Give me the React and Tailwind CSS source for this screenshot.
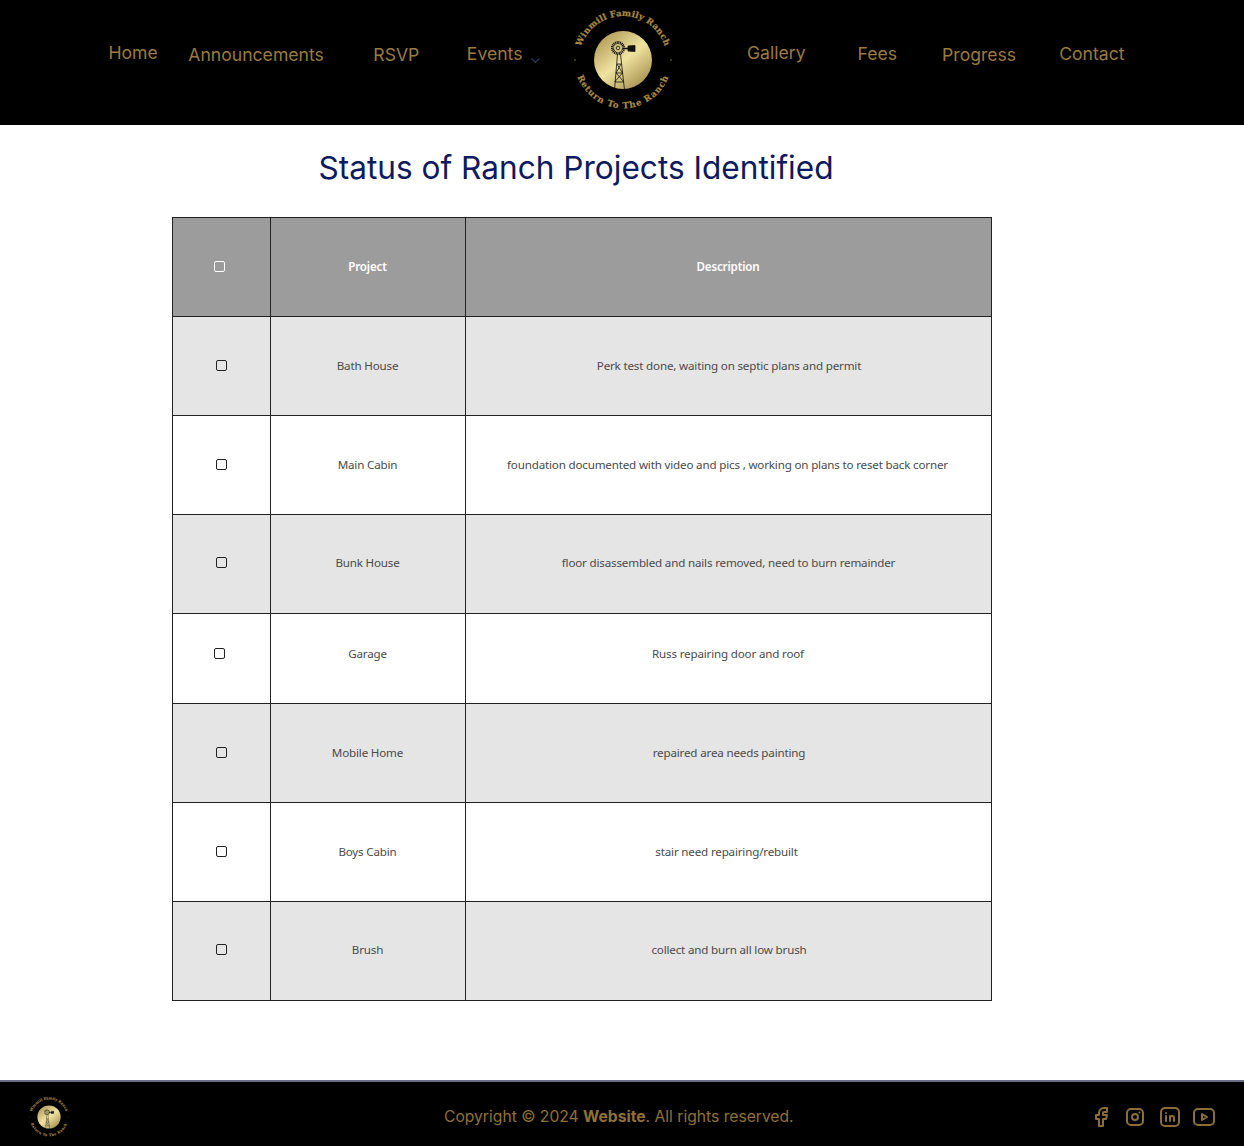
import React from 'react';
import { TbBrandFacebook, TbBrandInstagram, TbBrandLinkedin, TbBrandYoutube, TbChevronDown } from 'react-icons/tb';

const rows = [
    { project: 'Bath House', text: 'Perk test done, waiting on septic plans and permit', h: 'h-[99px]', shade: true, box: 'ml-[43px]', tx: 'pl-[1px]', pb: '' },
    { project: 'Main Cabin', text: 'foundation documented with video and pics , working on plans to reset back corner', h: 'h-[99px]', shade: false, box: 'ml-[43px]', tx: 'pr-[2px]', pb: '' },
    { project: 'Bunk House', text: 'floor disassembled and nails removed, need to burn remainder', h: 'h-[99px]', shade: true, box: 'ml-[43px]', tx: '', pb: 'pb-[2px]' },
    { project: 'Garage', text: 'Russ repairing door and roof', h: 'h-[90px]', shade: false, box: 'ml-[41px]', tx: 'pr-[1px]', pb: 'pb-[9px]' },
    { project: 'Mobile Home', text: 'repaired area needs painting', h: 'h-[99px]', shade: true, box: 'ml-[43px]', tx: 'pl-[1px]', pb: '' },
    { project: 'Boys Cabin', text: 'stair need repairing/rebuilt', h: 'h-[99px]', shade: false, box: 'ml-[43px]', tx: 'pr-[4px]', pb: '' },
    { project: 'Brush', text: 'collect and burn all low brush', h: 'h-[99px]', shade: true, box: 'ml-[43px]', tx: 'pl-[1px]', pb: 'pb-[2px]' },
];

const Logo = ({ size, id }) => (
    <svg width={size} height={size} viewBox="0 0 100 100" className="overflow-visible">
        <defs>
            <linearGradient id={`${id}gold`} x1="0.1" y1="0" x2="0.9" y2="1">
                <stop offset="0" stopColor="#a8904c" />
                <stop offset="0.5" stopColor="#f0e3a0" />
                <stop offset="1" stopColor="#9c8544" />
            </linearGradient>
            <path id={`${id}top`} d="M 6.73 58 A 44 44 0 1 1 93.27 58" />
            <path id={`${id}bot`} d="M 2.2 58 A 48.5 48.5 0 0 0 97.8 58" />
        </defs>
        <circle cx="50" cy="50" r="29" fill={`url(#${id}gold)`} />
        <text fill="#a98a45" stroke="#a98a45" strokeWidth="0.2" fontFamily="'DejaVu Serif', serif" fontWeight="700" fontSize="8.6" letterSpacing="0.2" textAnchor="middle">
            <textPath href={`#${id}top`} startOffset="50%">Winmill Family Ranch</textPath>
        </text>
        <text fill="#a98a45" stroke="#a98a45" strokeWidth="0.2" fontFamily="'DejaVu Serif', serif" fontWeight="700" fontSize="8.6" letterSpacing="0.8" textAnchor="middle">
            <textPath href={`#${id}bot`} startOffset="50%">Return To The Ranch</textPath>
        </text>
        <circle cx="2" cy="50" r="0.7" fill="#a98a45" />
        <circle cx="98" cy="50" r="0.7" fill="#a98a45" />
        {/* windmill */}
        <g stroke="#111" fill="none">
            <circle cx="45" cy="38" r="5.5" strokeWidth="3" strokeDasharray="1 0.6" />
            <circle cx="45" cy="38" r="1.8" strokeWidth="0.8" />
            <path d="M50 38.5h5" strokeWidth="1.5" />
            <path d="M55 36l7 -0.5v6l-7 -0.5z" fill="#111" strokeWidth="0.8" />
            <path d="M44.5 44L41.5 80M47.5 44L51.5 80M44 54h4M43 63h6.5M42 72h9M44 54l5.5 9M48 54l-5 9M43 63l8 9M49.5 63l-8 9" strokeWidth="0.8" />
        </g>
    </svg>
);

const Check = ({ className }) => (
    <span className={`block w-[11px] h-[11px] rounded-[2px] border ${className}`}></span>
);

const navClass = "font-['Inter',sans-serif] text-[17.6px] leading-[24px] text-[#9a7a40] whitespace-nowrap";

const App = () => {
    return (
        <div className="w-[1244px] h-[1146px] bg-white flex flex-col">
            <header className="h-[125px] bg-black flex items-start shrink-0">
                <a className={`${navClass} ml-[108.5px] mt-[41px]`}>Home</a>
                <a className={`${navClass} ml-[30.5px] mt-[43px]`}>Announcements</a>
                <a className={`${navClass} ml-[49.5px] mt-[43px]`}>RSVP</a>
                <a className={`${navClass} ml-[47.5px] mt-[42px]`}>Events</a>
                <TbChevronDown className="ml-[6px] mt-[53px] text-[#2f3a5c]" size={15} />
                <div className="ml-[30px] mt-[10px]"><Logo size={100} id="a" /></div>
                <a className={`${navClass} ml-[73.5px] mt-[41px]`}>Gallery</a>
                <a className={`${navClass} ml-[52px] mt-[42px]`}>Fees</a>
                <a className={`${navClass} ml-[45px] mt-[43px]`}>Progress</a>
                <a className={`${navClass} ml-[43px] mt-[42px]`}>Contact</a>
            </header>

            <main className="flex-1 flex flex-col">
                <h1 className="w-[1152px] mt-[23px] text-center font-['Inter',sans-serif] text-[31.6px] leading-[40px] font-normal text-[#0e1a5e]">
                    Status of Ranch Projects Identified
                </h1>
                <table className="ml-[172px] mt-[29px] w-[819px] table-fixed border-collapse font-['Noto_Sans',sans-serif] text-[11.6px] tracking-[-0.17px] text-[#4a4a4a]">
                    <colgroup>
                        <col className="w-[98px]" />
                        <col className="w-[195px]" />
                        <col className="w-[526px]" />
                    </colgroup>
                    <thead>
                        <tr className="h-[99px] bg-[#9c9c9c] text-white">
                            <th className="border border-[#222] p-0"><Check className="ml-[41px] border-white -mt-[2px]" /></th>
                            <th className="border border-[#222] p-0 pr-[1px] font-semibold">Project</th>
                            <th className="border border-[#222] p-0 pr-[1px] font-semibold">Description</th>
                        </tr>
                    </thead>
                    <tbody>
                        {rows.map((r) => (
                            <tr key={r.project} className={`${r.h} ${r.shade ? 'bg-[#e5e5e5]' : 'bg-white'}`}>
                                <td className={`border border-[#222] p-0 ${r.pb}`}><Check className={`${r.box} border-[#222] -mt-[2px]`} /></td>
                                <td className={`border border-[#222] p-0 pr-[1px] text-center ${r.pb}`}>{r.project}</td>
                                <td className={`border border-[#222] p-0 text-center ${r.tx} ${r.pb}`}>{r.text}</td>
                            </tr>
                        ))}
                    </tbody>
                </table>
            </main>

            <footer className="h-[66px] bg-black border-t-2 border-[#6b6f85] flex items-center shrink-0 pt-[6px]">
                <div className="ml-[29px]"><Logo size={40} id="b" /></div>
                <p className="ml-[375px] font-['Inter',sans-serif] text-[15.65px] text-[#8f7138] whitespace-nowrap">
                    Copyright © 2024 <span className="font-bold">Website</span>. All rights reserved.
                </p>
                <div className="ml-auto mr-[28px] flex items-center gap-[10.3px] text-[#8a6d38]">
                    <TbBrandFacebook size={24} />
                    <TbBrandInstagram size={24} />
                    <TbBrandLinkedin size={24} />
                    <TbBrandYoutube size={24} />
                </div>
            </footer>
        </div>
    );
};

export default App;
